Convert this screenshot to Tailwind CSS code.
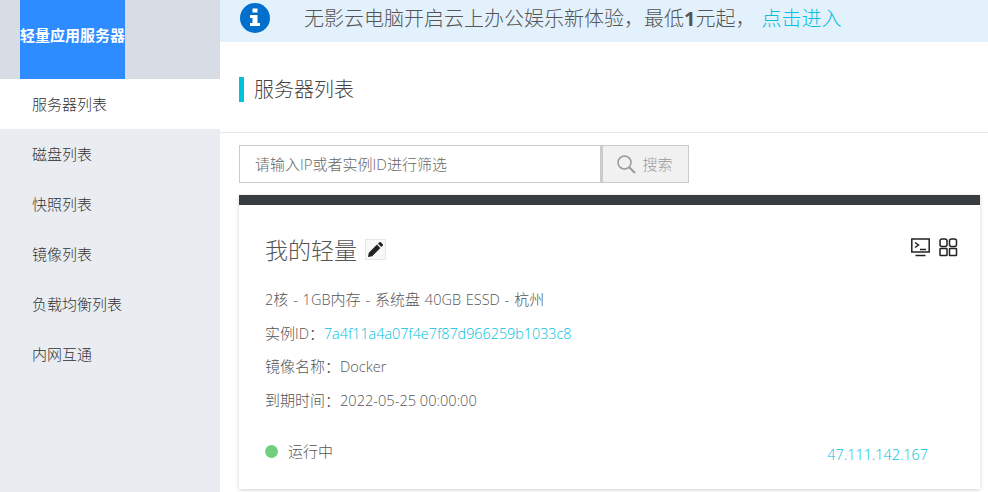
<!DOCTYPE html>
<html lang="zh">
<head>
<meta charset="utf-8">
<script src="https://cdn.jsdelivr.net/npm/@tailwindcss/browser@4"></script>
</head>
<body class="overflow-hidden bg-white">
<div class="flex h-[492px] w-[988px] overflow-hidden font-['Open_Sans','Noto_Sans_CJK_SC',sans-serif] font-light text-[#555]">
  <aside class="w-[220px] shrink-0 bg-[#e9edf2] text-[15px] text-[#333]">
    <div class="h-[79px] bg-[#d8dde5] pl-5">
      <div class="flex h-[79px] w-[105px] items-center justify-center whitespace-nowrap bg-[#2d8cff] pb-[8px] text-[15px] font-bold text-white">轻量应用服务器</div>
    </div>
    <nav class="flex flex-col">
      <a class="flex h-[50px] items-center bg-white pl-8">服务器列表</a>
      <a class="flex h-[50px] items-center pl-8">磁盘列表</a>
      <a class="flex h-[50px] items-center pl-8">快照列表</a>
      <a class="flex h-[50px] items-center pl-8">镜像列表</a>
      <a class="flex h-[50px] items-center pl-8">负载均衡列表</a>
      <a class="flex h-[50px] items-center pl-8">内网互通</a>
    </nav>
  </aside>
  <main class="flex min-w-0 flex-1 flex-col">
    <div class="flex h-[42px] items-start bg-[#e3f1fc] pl-5 text-[20px] text-[#555]">
      <svg class="mt-[3px] h-[30px] w-[30px] shrink-0" viewBox="0 0 30 30"><circle cx="15" cy="15" r="15" fill="#0070cc"/><rect x="12.500" y="5.500" width="5" height="4" fill="#fff"/><path d="M10 12h7.500v8H20v3H10v-3h2.500v-5H10z" fill="#fff"/></svg>
      <p class="ml-[34px] flex h-[37px] items-center whitespace-nowrap">无影云电脑开启云上办公娱乐新体验，最低<b class="font-bold">1</b>元起，<a class="ml-[6px] text-[#00c1de]">点击进入</a></p>
    </div>
    <div class="flex h-[91px] items-center border-b border-[#e3e5e8] pl-[19px] pt-[5px]">
      <span class="h-[25px] w-[5px] bg-[#00c1de]"></span>
      <h1 class="ml-[10px] text-[20px] leading-[25px] text-[#444]">服务器列表</h1>
    </div>
    <div class="ml-[19px] mt-3 flex h-[38px] w-[450px] text-[15px]">
      <div class="flex w-[362px] items-center border border-[#ccc] pl-[15px] text-[#666]">请输入IP或者实例ID进行筛选</div>
      <button class="flex w-[88px] items-center justify-center gap-[6px] border border-l-2 border-[#ccc] bg-[#f1f1f1] pr-[2px] text-[#999]">
        <svg class="h-5 w-5" viewBox="0 0 20 20" fill="none" stroke="#999" stroke-width="1.500"><circle cx="8.500" cy="8.500" r="6.500"/><path d="M13.500 13.500 19 19" stroke-width="2"/></svg>
        搜索
      </button>
    </div>
    <section class="ml-[19px] mt-3 h-[294px] w-[741px] border-t-[10px] border-[#373d41] bg-white shadow-[0_1px_4px_rgba(0,0,0,0.18)]">
      <div class="flex justify-between pl-[26px] pr-[21px] pt-[33px]">
        <div class="-mt-[2px] flex items-center gap-2">
          <h2 class="pt-[1px] text-[23px] leading-[26px] text-[#555]">我的轻量</h2>
          <span class="flex h-[21px] w-[21px] items-center justify-center border border-[#e6e6e6] bg-[#f8f8f8]">
            <svg class="h-[17px] w-[17px]" viewBox="0 0 16 16" fill="#222"><path d="M11.600 1.200a1 1 0 0 1 1.400 0l1.800 1.800a1 1 0 0 1 0 1.400l-1.300 1.300-3.200-3.200zM9.400 3.400l3.200 3.200-7.700 7.700-4 .8.800-4z"/></svg>
          </span>
        </div>
        <div class="flex gap-2">
          <svg class="h-5 w-5" viewBox="0 0 20 20" fill="none" stroke="#222" stroke-width="1.500"><rect x=".8" y="1" width="17.400" height="13"/><path d="m4 4.500 3.500 2.500L4 9.500M9 11.500h6M4.500 17.500h10"/></svg>
          <svg class="h-5 w-5" viewBox="0 0 20 20" fill="none" stroke="#222" stroke-width="1.500"><rect x="1" y="1" width="7" height="7.500" rx="2"/><rect x="10.500" y="1" width="7" height="7.500" rx="2"/><rect x="1" y="10.500" width="7" height="7" rx=".5"/><rect x="10.500" y="10.500" width="7" height="7" rx=".5"/></svg>
        </div>
      </div>
      <div class="mt-[26px] flex flex-col gap-[12.500px] pl-[26px] text-[15px] leading-[20px]">
        <p class="[word-spacing:1px]"><span class="text-[14.500px]">2</span>核 <span class="text-[14.500px]">- 1GB</span>内存 <span class="text-[14.500px]">-</span> 系统盘 <span class="text-[14.500px]">40GB ESSD -</span> 杭州</p>
        <p>实例<span class="text-[14.500px]">ID</span>：<a class="text-[14.350px] text-[#00c1de]">7a4f11a4a07f4e7f87d966259b1033c8</a></p>
        <p>镜像名称：<span class="text-[14.500px]">Docker</span></p>
        <p>到期时间：<span class="text-[14.600px]">2022-05-25 00:00:00</span></p>
      </div>
      <div class="mt-[28px] flex items-center justify-between pl-[26px] pr-[52px] text-[15px]">
        <div class="flex items-center gap-[10px]">
          <span class="h-[13px] w-[13px] rounded-full bg-[#70d080]"></span>
          <span>运行中</span>
        </div>
        <a class="mt-[6px] text-[14.400px] text-[#00c1de]">47.111.142.167</a>
      </div>
    </section>
  </main>
</div>
</body>
</html>
